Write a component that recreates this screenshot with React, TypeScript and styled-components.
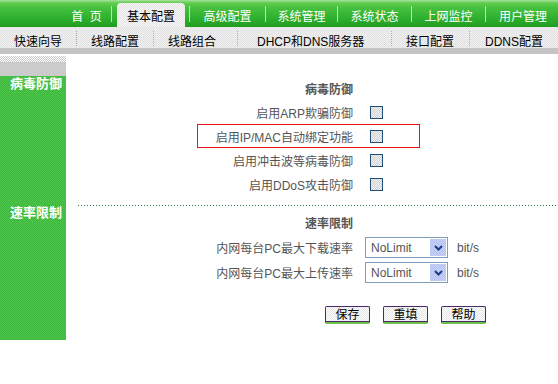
import React from 'react';
import styled, { createGlobalStyle } from 'styled-components';

const GlobalStyle = createGlobalStyle`
    body {
        margin: 0;
        background: #fff;
        font-family: "Liberation Sans", "Noto Sans CJK SC", sans-serif;
        font-size: 12px;
    }
`;

const dither = (a: string, b: string) =>
    `repeating-conic-gradient(${a} 0 25%, ${b} 0 50%) 0 0 / 2px 2px`;

// ---------------- <TopNav /> --------------------------------------

const TopNav = styled.div`
    display: flex;
    height: 27px;
    padding-left: 62px;
    background: linear-gradient(#a8e29c 0, #62cc4e 3px, #45c03e 8px, #2fb02f 18px, #209c20 27px);
`;

const NavTab = styled.div<{ $w: number }>`
    width: ${p => p.$w}px;
    flex-shrink: 0;
    display: flex;
    align-items: stretch;
    justify-content: center;
    padding-top: 3px;
    box-sizing: border-box;
`;

const NavLabel = styled.div<{ $active?: boolean }>`
    flex: 1;
    display: flex;
    align-items: center;
    justify-content: center;
    color: ${p => p.$active ? '#000' : '#fff'};
    font-size: 12px;
    word-spacing: 3px;
    margin: ${p => p.$active ? '0 4px 0 5px' : '0'};
    border-radius: 4px 4px 0 0;
    background: ${p => p.$active ? dither('#e4e4e4', '#f6f6f6') : 'none'};
`;

const NavSep = styled.div`
    width: 1px;
    flex-shrink: 0;
    margin: 6px 0 5px;
    background: #b8eab0;
`;

// ---------------- <SubNav /> --------------------------------------

const SubNav = styled.div`
    display: flex;
    height: 21px;
    background: ${dither('#e2e2e2', '#f0f0f0')};
    border-bottom: 6px solid #c4c4c4;
`;

const SubItem = styled.div<{ $w?: number; $pl: number }>`
    width: ${p => p.$w ? `${p.$w}px` : 'auto'};
    flex: ${p => p.$w ? '0 0 auto' : '1'};
    padding-left: ${p => p.$pl}px;
    box-sizing: border-box;
    padding-top: 8px;
    line-height: 14px;
    color: #000;
    white-space: nowrap;
`;

const SubSep = styled.div`
    width: 1px;
    flex-shrink: 0;
    margin: 4px 0 1px;
    background: repeating-linear-gradient(#aaa 0 1px, transparent 1px 2px);
`;

// ---------------- <Main /> --------------------------------------

const Main = styled.div`
    display: grid;
    grid-template-columns: 66px 1fr;
    margin-top: 2px;
`;

const Side = styled.div`
    background: ${dither('#3cb63c', '#4fc74b')};
`;

const SideHead = styled.div`
    height: 20px;
    background: linear-gradient(transparent 0 6px, #cbcbcb 6px),
        ${dither('#c8c8c8', '#ffffff')};
`;

const SideLabel = styled.div`
    color: #fff;
    font-weight: bold;
    font-size: 13px;
    line-height: 16px;
    text-align: right;
    padding-right: 4px;
`;

const Section = styled.div<{ $top: number; $bottom: number }>`
    padding-top: ${p => p.$top}px;
    padding-bottom: ${p => p.$bottom}px;
`;

const Divider = styled.div`
    height: 1px;
    margin-left: 12px;
    background: repeating-linear-gradient(to right, #2d7d3e 0 1px, transparent 1px 3px);
`;

const FormGrid = styled.div<{ $row: number; $top?: number }>`
    display: grid;
    grid-template-columns: 287px auto auto 1fr;
    grid-auto-rows: ${p => p.$row}px;
    align-items: center;
    column-gap: 9px;
    margin-top: ${p => p.$top ?? 0}px;
    color: #555;
`;

const Heading = styled.div`
    grid-column: 1;
    text-align: right;
    font-weight: bold;
    color: #555;
    font-size: 12px;
`;

const Label = styled.div<{ $mark?: boolean }>`
    grid-column: 1;
    text-align: right;
    position: relative;
    white-space: nowrap;

    &::after {
        content: "";
        display: ${p => p.$mark ? 'block' : 'none'};
        position: absolute;
        left: 131px;
        width: 221px;
        top: -4px;
        bottom: -3px;
        border: 1px solid #e8141c;
    }
`;

const Check = styled.span`
    grid-column: 2;
    width: 11px;
    height: 11px;
    margin-left: 8px;
    border: 1px solid #1f4e7c;
    background: ${dither('#d2d2d2', '#f2f2f2')};
`;

const Select = styled.div`
    grid-column: 2;
    width: 76px;
    height: 19px;
    border: 1px solid #7f9db9;
    display: flex;
    align-items: center;
    justify-content: space-between;
    padding-left: 5px;
    box-sizing: content-box;
    margin-left: 3px;
    color: #555;
    font-size: 12px;
`;

const SelectArrow = styled.div`
    width: 16px;
    height: 17px;
    margin-right: 1px;
    display: flex;
    align-items: center;
    justify-content: center;
    background: ${dither('#b3c2f0', '#c8d2f6')};
`;

const Unit = styled.div`
    grid-column: 3;
    color: #555;
`;

const ButtonRow = styled.div`
    display: flex;
    gap: 13px;
    padding-left: 259px;
    margin-top: 21px;
`;

const Button = styled.button`
    width: 45px;
    height: 18px;
    padding: 0;
    border: 1px solid #4a2a6a;
    border-bottom: 2px solid #6cc04a;
    border-radius: 2px;
    background: ${dither('#e4e4e4', '#ffffff')};
    color: #000;
    font-family: "Liberation Sans", "Noto Sans CJK SC", sans-serif;
    font-size: 12px;
    line-height: 14px;
    box-shadow: inset 0 -1px 0 #4a2a6a;
`;

const Chevron = () => (
    <svg width="9" height="6" viewBox="0 0 9 6">
        <path d="M1 1 L4.5 4.5 L8 1" stroke="#1b3a8a" strokeWidth="2" fill="none" />
    </svg>
);

const tabs: Array<[string, number]> = [
    ['首 页', 49], ['基本配置', 77], ['高级配置', 75], ['系统管理', 71],
    ['系统状态', 73], ['上网监控', 73], ['用户管理', 74],
];

const subs: Array<[string, number | undefined, number]> = [
    ['快速向导', 76, 14], ['线路配置', 76, 14], ['线路组合', 83, 14],
    ['DHCP和DNS服务器', 153, 19], ['接口配置', 77, 14], ['DDNS配置', undefined, 15],
];

const virusRows = ['启用ARP欺骗防御', '启用IP/MAC自动绑定功能', '启用冲击波等病毒防御', '启用DDoS攻击防御'];

export default function App() {
    return (
        <>
            <GlobalStyle />
            <TopNav>
                {tabs.map(([t, w], i) => (
                    <React.Fragment key={t}>
                        {i > 0 && <NavSep />}
                        <NavTab $w={w}>
                            <NavLabel $active={i === 1}>{t}</NavLabel>
                        </NavTab>
                    </React.Fragment>
                ))}
            </TopNav>
            <SubNav>
                {subs.map(([t, w, pl], i) => (
                    <React.Fragment key={t}>
                        {i > 0 && <SubSep />}
                        <SubItem $w={w} $pl={pl}>{t}</SubItem>
                    </React.Fragment>
                ))}
            </SubNav>
            <Main>
                <Side>
                    <SideHead />
                    <SideLabel>病毒防御</SideLabel>
                </Side>
                <Section $top={20} $bottom={9}>
                    <FormGrid $row={24}>
                        <Heading>病毒防御</Heading>
                        {virusRows.map((r, i) => (
                            <React.Fragment key={r}>
                                <Label $mark={i === 1}>{r}</Label>
                                <Check />
                            </React.Fragment>
                        ))}
                    </FormGrid>
                </Section>
                <Side>
                    <SideLabel>速率限制</SideLabel>
                </Side>
                <Section $top={0} $bottom={16}>
                    <Divider />
                    <FormGrid $row={25} $top={4}>
                        <Heading>速率限制</Heading>
                        <Label>内网每台PC最大下载速率</Label>
                        <Select>NoLimit<SelectArrow><Chevron /></SelectArrow></Select>
                        <Unit>bit/s</Unit>
                        <Label>内网每台PC最大上传速率</Label>
                        <Select>NoLimit<SelectArrow><Chevron /></SelectArrow></Select>
                        <Unit>bit/s</Unit>
                    </FormGrid>
                    <ButtonRow>
                        <Button>保存</Button>
                        <Button>重填</Button>
                        <Button>帮助</Button>
                    </ButtonRow>
                </Section>
            </Main>
        </>
    );
}
